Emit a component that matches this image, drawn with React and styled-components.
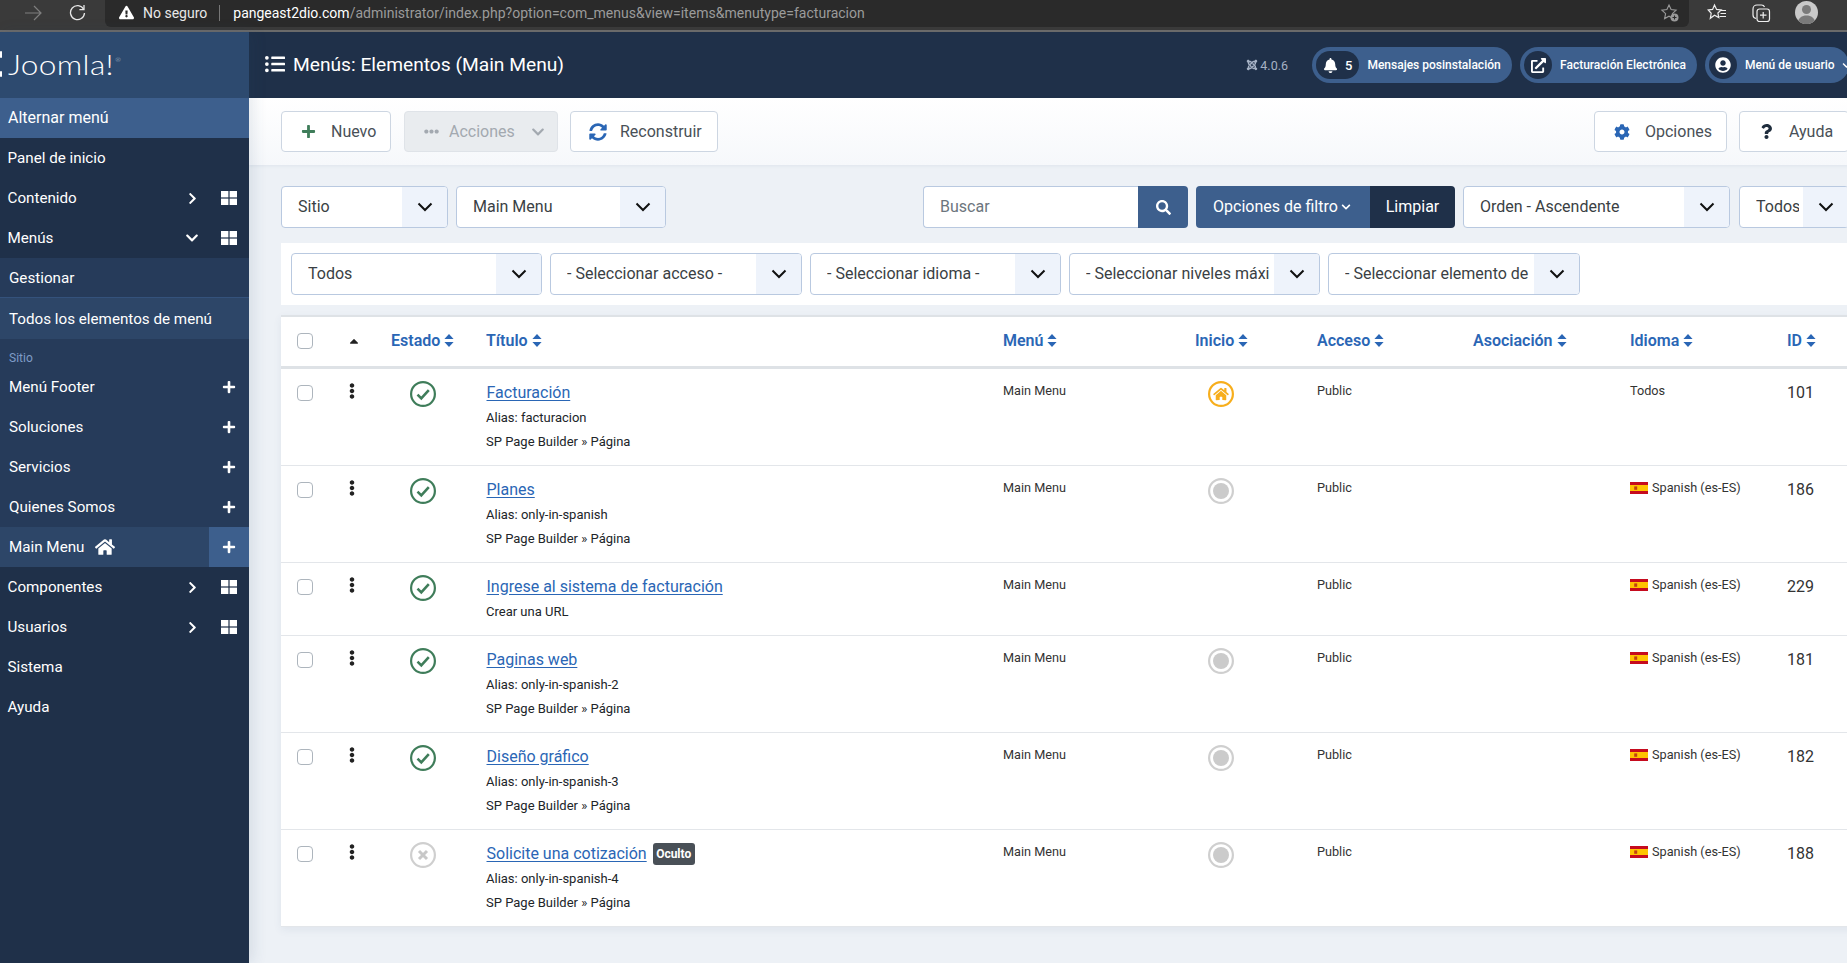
import React from 'react';
import styled, { createGlobalStyle } from 'styled-components';
import {
  FaJoomla, FaHome, FaPlus, FaEllipsisH, FaEllipsisV, FaSyncAlt, FaCog, FaQuestion, FaSearch,
  FaBell, FaExternalLinkAlt, FaUserCircle, FaChevronDown, FaChevronRight, FaListUl, FaCaretUp, FaExclamationTriangle,
} from 'react-icons/fa';

const Global = createGlobalStyle`
  html, body { margin: 0; padding: 0; height: 100%; overflow: hidden; background: #edf1f6; }
  * { box-sizing: border-box; }
  body { font-family: Roboto, "Liberation Sans", sans-serif; }
`;

const Page = styled.div`width: 1847px; height: 963px; overflow: hidden; display: flex; flex-direction: column;`;

/* browser chrome */
const Browser = styled.div`
  flex: 0 0 32px; width: 1847px; background: #3a3a3a; border-bottom: 2px solid #6a6a6a;
  display: flex; align-items: flex-start; color: #fff;
`;
const Nav = styled.div`flex: 0 0 105px; height: 25px; display: flex; align-items: center; padding-left: 24px; gap: 27px;`;
const AddressField = styled.div`
  flex: 0 0 1584px; height: 27px; background: #2a2a2a; border-radius: 0 0 6px 6px;
  display: flex; align-items: center; padding: 0 9px 2px 14px; font-size: 14px;
`;
const Warn = styled.span`display: flex; color: #fff; font-size: 15px; margin-right: 9px;`;
const Insecure = styled.span`color: #e8e8e8; font-size: 14px;`;
const Sep = styled.span`width: 1px; height: 16px; background: #777; margin: 0 13px 0 12px;`;
const Host = styled.span`color: #fff; font-size: 14px;`;
const UrlRest = styled.span`color: #9b9b9b; font-size: 14px; letter-spacing: .02px; flex: 1;`;
const Tools = styled.div`flex: 1; height: 25px; display: flex; align-items: center; padding-left: 18px; gap: 24px;`;
const Avatar = styled.div`width: 23px; height: 23px; border-radius: 50%; overflow: hidden;`;

const Body = styled.div`display: flex; flex: 1; width: 1849px; min-height: 0;`;

/* sidebar */
const Sidebar = styled.aside`
  flex: 0 0 249px; background: #1f3049; color: #fff; display: flex; flex-direction: column;
  box-shadow: 4px 0 14px rgba(40, 70, 110, .12); z-index: 1;
`;
const Brand = styled.div`height: 66px; background: #2d4a6f; display: flex; align-items: center; padding-bottom: 2px;`;
const Wordmark = styled.span`
  display: inline-block; transform: scaleX(1.13); transform-origin: left center;
  font-family: Lato, "Open Sans", sans-serif; font-weight: 300; font-size: 28px; letter-spacing: .3px;
  color: #fff; margin-left: 6px; line-height: 1;
`;
const Reg = styled.sup`font-size: 6px; color: #c6d0dd; margin-left: 1px; position: relative; top: -3px;`;
const Toggle = styled.div`height: 40px; background: #3d5f8d; display: flex; align-items: center; padding: 0 0 2px 8px; font-size: 16px;`;
const Row = styled.div`
  height: 40px; display: flex; align-items: center; font-size: 15.2px;
  padding-left: ${p => (p.$sub ? 9 : 7.5)}px;
  background: ${p => (p.$active ? '#2d4668' : p.$sub ? '#263b5a' : '#1f3049')};
`;
const RowLabel = styled.span`flex: 1; display: flex; align-items: center; gap: 11px;`;
const Chev = styled.span`width: 34px; display: flex; justify-content: center;`;
const RowIcon = styled.span`width: 40px; height: 40px; display: flex; align-items: center; justify-content: center; background: ${p => (p.$on ? '#3d5f8d' : 'transparent')};`;
const SubBlock = styled.div`background: #263b5a;`;
const SubLink = styled.div`
  height: ${p => p.$h}px; display: flex; align-items: center; padding-left: 9px; font-size: 15.2px;
  background: ${p => (p.$on ? '#2d4668' : '#263b5a')};
  ${p => p.$rule && 'border-bottom: 1px solid #34527c;'}
`;
const Section = styled.div`height: 28px; display: flex; align-items: center; padding: 10px 0 0 9px; font-size: 12px; color: #7f9cc7; background: #263b5a;`;

/* main */
const Main = styled.main`flex: 0 0 1600px; display: flex; flex-direction: column; min-width: 0;`;
const Header = styled.header`height: 66px; background: #1f3049; display: flex; align-items: center; padding-left: 16px; color: #fff;`;
const Title = styled.h1`margin: 0; font-size: 19.2px; font-weight: 400; display: flex; align-items: center; gap: 8px; flex: 1; padding-bottom: 2px;`;
const Version = styled.span`display: flex; align-items: center; gap: 2px; font-size: 12.5px; color: #a6b2c5; margin-right: 24px;`;
const Pills = styled.div`display: flex; gap: 8px;`;
const Pill = styled.div`
  height: 36px; width: ${p => p.$w}px; border-radius: 18px; background: #3d5f8d; padding-left: 4px;
  display: flex; align-items: center; font-size: 12px; font-weight: 500; color: #fff; white-space: nowrap;
`;
const PillBadge = styled.span`
  height: 28px; min-width: 28px; border-radius: 14px; background: #1f3049; display: flex; align-items: center; justify-content: center; gap: 7px;
  padding: ${p => (p.$wide ? '0 7px 0 7px' : '0')}; font-size: 13px; margin-right: 8px;
`;
const PillCaret = styled.span`display: flex; margin-left: 7px;`;

const Toolbar = styled.div`
  height: 67px; padding: 13px 0 14px 32px; display: flex; gap: 12px;
  background: linear-gradient(#fff, #f6f8fb); box-shadow: 0 1px 3px rgba(60, 90, 130, .08);
`;
const Tool = styled.button`
  height: 41px; border-radius: 4px; border: 1px solid ${p => (p.$off ? '#dfe3e8' : '#cdd6e2')};
  background: ${p => (p.$off ? '#e9ecef' : '#fff')}; color: ${p => (p.$off ? '#a3a9b0' : '#495057')};
  font: 400 16px Roboto, sans-serif; display: flex; align-items: center; padding: 0 0 0 ${p => p.$pl || 19}px; gap: ${p => p.$g || 15}px;
  flex: 0 0 ${p => p.$w}px; width: ${p => p.$w}px;
  ${p => p.$end && 'margin-left: auto;'}
  ${p => p.$nudge && `margin-left: ${p.$nudge}px;`}
`;
const ToolCaret = styled.span`display: flex; margin-left: 6px;`;

const Content = styled.div`padding: 21px 0 0 32px; display: flex; flex-direction: column;`;
const Filters = styled.div`display: flex; gap: 8px; height: 42px;`;
const SelectBox = styled.div`
  flex: 0 0 ${p => p.$w}px; width: ${p => p.$w}px; height: 42px; border: 1px solid #b9c9e0; border-radius: 4px; background: #fff;
  display: flex; overflow: hidden; font-size: 16px; color: #3a3f44; ${p => p.$gapL && `margin-left: ${p.$gapL}px;`}
`;
const SelectText = styled.span`flex: 1; min-width: 0; margin: 0 4px 0 16px; line-height: 40px; white-space: nowrap; overflow: hidden;`;
const SelectArrow = styled.span`flex: 0 0 45px; background: #eef3fb; display: flex; align-items: center; justify-content: center;`;
const Search = styled.div`margin-left: auto; flex: 0 0 265px; display: flex; height: 42px;`;
const SearchInput = styled.div`
  flex: 1; border: 1px solid #b9c9e0; border-right: 0; border-radius: 4px 0 0 4px; background: #fff;
  font-size: 16px; color: #6c757d; line-height: 40px; padding-left: 16px;
`;
const SearchBtn = styled.div`flex: 0 0 50px; background: #3d5f8d; border-radius: 0 4px 4px 0; color: #fff; display: flex; align-items: center; justify-content: center;`;
const FilterGroup = styled.div`flex: 0 0 259px; display: flex; height: 42px; color: #fff; font-size: 16px; border-radius: 4px; overflow: hidden; line-height: 40px;`;
const FilterOpt = styled.div`flex: 0 0 174px; background: #3d5f8d; display: flex; align-items: center; justify-content: center; gap: 3px; padding: 0 2px 1px 0;`;
const FilterClear = styled.div`flex: 1; background: #1f3049; display: flex; align-items: center; justify-content: center; padding-bottom: 1px;`;

const Panel = styled.div`margin-top: 15px; height: 62px; background: #fff; padding: 10px; display: flex; gap: 8px;`;

const Table = styled.table`
  margin-top: 10px; width: 100%; table-layout: fixed; border-collapse: collapse; background: #fff;
  border-top: 2px solid #dee2e6; box-shadow: 0 3px 8px rgba(60, 90, 130, .08);
`;
const Th = styled.th`
  height: 51px; padding: 0 0 1px 16px; text-align: left; border-bottom: 3px solid #dee2e6; vertical-align: middle;
  font-size: 16px; font-weight: 600; color: #2a66b5; white-space: nowrap;
`;
const ThInner = styled.span`display: inline-flex; align-items: center; gap: 4px;`;
const Tr = styled.tr`border-bottom: 1px solid #e3e6ea;`;
const Td = styled.td`padding: 11px 0 11px 16px; vertical-align: top; font-size: 12.7px; line-height: 22px; color: #333;`;
const Check = styled.span`display: block; width: 16px; height: 16px; border: 1px solid #adb5bd; border-radius: 4px; background: #fff; margin-top: ${p => p.$mt || 0}px;`;
const Dots = styled.span`display: block; color: #222; font-size: 16px; line-height: 0; margin-top: 3px; margin-left: -3.5px;`;
const Status = styled.span`display: block; margin: 1px 0 0 ${p => p.$ml}px;`;
const Name = styled.a`color: #2a66b5; font-size: 16px; line-height: 24px; text-decoration: underline; text-underline-offset: 2px;`;
const NameLine = styled.div`display: flex; align-items: center; gap: 6px; height: 24px; margin: 1px 0 1px .5px;`;
const Meta = styled.div`font-size: 13px; line-height: 24px; color: #212529;`;
const Badge = styled.span`
  height: 22px; width: 42px; border-radius: 3px; background: #495057; color: #fff;
  font-size: 12px; font-weight: 700; display: flex; align-items: center; justify-content: center;
`;
const Lang = styled.span`display: inline-flex; align-items: center; gap: 4px;`;
const Num = styled.span`display: block; margin-top: 1px; font-size: 16px; line-height: 24px; color: #333;`;

const SortIcon = () => (
  <svg width="10" height="13" viewBox="0 0 10 13" fill="currentColor">
    <path d="M5 0 L9.6 5 H.4Z M.4 8 H9.6 L5 13Z" />
  </svg>
);
const Chevron = ({ w = 16 }) => (
  <svg width={w} height="10" viewBox="0 0 16 10" fill="none" stroke="#111" strokeWidth="2">
    <path d="M1.5 1.5 8 8l6.5-6.5" />
  </svg>
);
const Tiles = () => (
  <svg width="16" height="14" viewBox="0 0 16 14" fill="#fff">
    <rect width="7.4" height="6.4" /><rect x="8.6" width="7.4" height="6.4" />
    <rect y="7.6" width="7.4" height="6.4" /><rect x="8.6" y="7.6" width="7.4" height="6.4" />
  </svg>
);
const Ring = ({ c, children }) => (
  <svg width="26" height="26" viewBox="0 0 26 26" fill="none">
    <circle cx="13" cy="13" r="11.9" stroke={c} strokeWidth="2.2" />
    {children}
  </svg>
);
const Ok = () => (
  <Ring c="#3f7d5a"><path d="M7.5 13.6 11.3 17.4 18.8 9.2" stroke="#3f7d5a" strokeWidth="2.6" /></Ring>
);
const No = () => (
  <Ring c="#cfcfcf"><path d="M9 9 17 17M17 9 9 17" stroke="#c8c8c8" strokeWidth="3" /></Ring>
);
const HomeOn = () => (
  <svg width="26" height="26" viewBox="0 0 26 26" fill="none">
    <circle cx="13" cy="13" r="11.9" stroke="#f7ae1c" strokeWidth="2.2" />
    <svg x="5" y="6" width="16" height="14" viewBox="0 0 576 512"><path fill="#f7ae1c" d="M280.37 148.26 96 300.11V464a16 16 0 0 0 16 16l112.06-.29a16 16 0 0 0 15.92-16V368a16 16 0 0 1 16-16h64a16 16 0 0 1 16 16v95.64a16 16 0 0 0 16 16.05L464 480a16 16 0 0 0 16-16V300L295.67 148.26a12.19 12.19 0 0 0-15.3 0zM571.6 251.47 488 182.56V44.05a12 12 0 0 0-12-12h-56a12 12 0 0 0-12 12v72.61L318.47 43a48 48 0 0 0-61 0L4.34 251.47a12 12 0 0 0-1.6 16.9l25.5 31A12 12 0 0 0 45.15 301l235.22-193.74a12.19 12.19 0 0 1 15.3 0L530.9 301a12 12 0 0 0 16.9-1.6l25.5-31a12 12 0 0 0-1.7-16.93z"/></svg>
  </svg>
);
const HomeOff = () => (
  <svg width="26" height="26" viewBox="0 0 26 26" fill="none">
    <circle cx="13" cy="13" r="11.9" stroke="#cfcfcf" strokeWidth="2.2" />
    <circle cx="13" cy="13" r="8" fill="#cbcbcb" />
  </svg>
);
const Flag = () => (
  <svg width="18" height="12" viewBox="0 0 18 12">
    <rect width="18" height="12" fill="#c60b1e" />
    <rect y="3" width="18" height="6" fill="#ffc400" />
    <rect x="4.2" y="4.4" width="3" height="3.4" fill="#ad1519" opacity=".75" />
  </svg>
);

const items = [
  { t: 'Facturación', a: 'Alias: facturacion', b: 'SP Page Builder » Página', on: true, home: 'on', lang: 'Todos', id: 101 },
  { t: 'Planes', a: 'Alias: only-in-spanish', b: 'SP Page Builder » Página', on: true, home: 'off', id: 186 },
  { t: 'Ingrese al sistema de facturación', a: 'Crear una URL', on: true, id: 229 },
  { t: 'Paginas web', a: 'Alias: only-in-spanish-2', b: 'SP Page Builder » Página', on: true, home: 'off', id: 181 },
  { t: 'Diseño gráfico', a: 'Alias: only-in-spanish-3', b: 'SP Page Builder » Página', on: true, home: 'off', id: 182 },
  { t: 'Solicite una cotización', a: 'Alias: only-in-spanish-4', b: 'SP Page Builder » Página', on: false, home: 'off', id: 188, hidden: true },
];

const cols = [50, 44, 95, 517, 192, 122, 156, 157, 157, 110];

const Sel = ({ w, gapL, children }) => (
  <SelectBox $w={w} $gapL={gapL}>
    <SelectText>{children}</SelectText>
    <SelectArrow><Chevron /></SelectArrow>
  </SelectBox>
);
const Head = ({ children }) => (
  <Th><ThInner>{children}<SortIcon /></ThInner></Th>
);
const TopRow = ({ children, open, plain }) => (
  <Row>
    <RowLabel>{children}</RowLabel>
    {!plain && <Chev>{open ? <FaChevronDown size={14} /> : <FaChevronRight size={13} />}</Chev>}
    {!plain && <RowIcon><Tiles /></RowIcon>}
  </Row>
);
const SubRow = ({ children, active, home }) => (
  <Row $sub $active={active}>
    <RowLabel>{children}{home && <FaHome size={20} />}</RowLabel>
    <RowIcon $on={active}><FaPlus size={14} /></RowIcon>
  </Row>
);

export default function App() {
  return (
    <Page>
      <Global />
      <Browser>
        <Nav>
          <svg width="18" height="16" viewBox="0 0 18 16" fill="none" stroke="#7f7f7f" strokeWidth="1.2"><path d="M1 8h16M10 1l7 7-7 7" /></svg>
          <svg width="17" height="17" viewBox="0 0 17 17" fill="none" stroke="#e6e6e6" strokeWidth="1.3"><path d="M14.6 5.2A7 7 0 1 0 15.5 9" /><path d="M15 1v4.6h-4.6" /></svg>
        </Nav>
        <AddressField>
          <Warn><FaExclamationTriangle /></Warn>
          <Insecure>No seguro</Insecure>
          <Sep />
          <Host>pangeast2dio.com</Host>
          <UrlRest>/administrator/index.php?option=com_menus&amp;view=items&amp;menutype=facturacion</UrlRest>
          <svg width="20" height="20" viewBox="0 0 20 20" fill="none" stroke="#9a9a9a" strokeWidth="1.1"><path d="M9 2l2.1 4.6 5 .6-3.7 3.4 1 5L9 13.2 4.6 15.6l1-5L1.9 7.2l5-.6z" /><circle cx="14.5" cy="14.5" r="4" fill="#9a9a9a" stroke="none" /><path d="M14.5 12.5v4M12.5 14.5h4" stroke="#2a2a2a" /></svg>
        </AddressField>
        <Tools>
          <svg width="20" height="20" viewBox="0 0 20 20" fill="none" stroke="#eee" strokeWidth="1.2"><path d="M7.5 2 9.6 6.4l4.6.5-3.3 3.1.9 4.6-4.3-2.3-4.2 3 .9-5L1.2 7l4.4-.6z" /><path d="M14 7.5h5M13.5 10.5h5.5M12.5 13.5h6.5" /></svg>
          <svg width="20" height="20" viewBox="0 0 20 20" fill="none" stroke="#eee" strokeWidth="1.2"><path d="M5 15.5c-1.7-.3-3-1.7-3-3.5V6c0-2.200 1.800-4 4-4h4.500c1.400 0 2.600.8 3 2" /><rect x="6" y="6" width="12.500" height="12.500" rx="2.500" /><path d="M12.200 9v6.500M9 12.200h6.500" /></svg>
          <Avatar>
            <svg width="23" height="23" viewBox="0 0 23 23"><rect width="23" height="23" fill="#c9c9c9" /><circle cx="11.500" cy="8.500" r="4.500" fill="#7a7a7a" /><path d="M2 23c1-6 5-8.500 9.500-8.500S20 17 21 23z" fill="#7a7a7a" /></svg>
          </Avatar>
        </Tools>
      </Browser>
      <Body>
        <Sidebar>
          <Brand>
            <svg width="2" height="26" viewBox="0 0 2 26" fill="#fff"><rect width="2" height="7" rx="1" /><rect y="20" width="2" height="6" rx="1" /></svg>
            <Wordmark>Joomla!<Reg>®</Reg></Wordmark>
          </Brand>
          <Toggle>Alternar menú</Toggle>
          <TopRow plain>Panel de inicio</TopRow>
          <TopRow>Contenido</TopRow>
          <TopRow open>Menús</TopRow>
          <SubBlock>
            <SubLink $h={40} $rule>Gestionar</SubLink>
            <SubLink $h={41} $on>Todos los elementos de menú</SubLink>
            <Section>Sitio</Section>
            <SubRow>Menú Footer</SubRow>
            <SubRow>Soluciones</SubRow>
            <SubRow>Servicios</SubRow>
            <SubRow>Quienes Somos</SubRow>
            <SubRow active home>Main Menu</SubRow>
          </SubBlock>
          <TopRow>Componentes</TopRow>
          <TopRow>Usuarios</TopRow>
          <TopRow plain>Sistema</TopRow>
          <TopRow plain>Ayuda</TopRow>
        </Sidebar>
        <Main>
          <Header>
            <Title><FaListUl size={20} />Menús: Elementos (Main Menu)</Title>
            <Version><FaJoomla size={12} />4.0.6</Version>
            <Pills>
              <Pill $w={200}><PillBadge $wide><FaBell size={15} /><span>5</span></PillBadge>Mensajes posinstalación</Pill>
              <Pill $w={177}><PillBadge><FaExternalLinkAlt size={15} /></PillBadge>Facturación Electrónica</Pill>
              <Pill $w={144}><PillBadge><FaUserCircle size={16} /></PillBadge>Menú de usuario<PillCaret><FaChevronDown size={9} /></PillCaret></Pill>
            </Pills>
          </Header>
          <Toolbar>
            <Tool $w={110}><FaPlus size={15} color="#3f7d5a" />Nuevo</Tool>
            <Tool $off $w={154} $g={10} $nudge={1}><FaEllipsisH size={15} />Acciones<ToolCaret><FaChevronDown size={14} /></ToolCaret></Tool>
            <Tool $w={148} $pl={18} $g={13}><FaSyncAlt size={18} color="#2a66b5" />Reconstruir</Tool>
            <Tool $end $w={133}><FaCog size={16} color="#2a66b5" />Opciones</Tool>
            <Tool $w={110}><FaQuestion size={15} color="#1f2d3d" />Ayuda</Tool>
          </Toolbar>
          <Content>
            <Filters>
              <Sel w={167}>Sitio</Sel>
              <Sel w={210}>Main Menu</Sel>
              <Search>
                <SearchInput>Buscar</SearchInput>
                <SearchBtn><FaSearch size={15} /></SearchBtn>
              </Search>
              <FilterGroup>
                <FilterOpt>Opciones de filtro<FaChevronDown size={10} /></FilterOpt>
                <FilterClear>Limpiar</FilterClear>
              </FilterGroup>
              <Sel w={267}>Orden - Ascendente</Sel>
              <Sel w={110} gapL={1}>Todos</Sel>
            </Filters>
            <Panel>
              <Sel w={251}>Todos</Sel>
              <Sel w={252}>- Seleccionar acceso -</Sel>
              <Sel w={251}>- Seleccionar idioma -</Sel>
              <Sel w={251}>- Seleccionar niveles máximos -</Sel>
              <Sel w={252}>- Seleccionar elemento de menú -</Sel>
            </Panel>
            <Table>
              <colgroup>{cols.map((c, i) => <col key={i} style={{ width: c }} />)}</colgroup>
              <thead>
                <tr>
                  <Th><Check /></Th>
                  <Th><FaCaretUp size={14} color="#222" style={{ display: 'block' }} /></Th>
                  <Head>Estado</Head>
                  <Head>Título</Head>
                  <Head>Menú</Head>
                  <Head>Inicio</Head>
                  <Head>Acceso</Head>
                  <Head>Asociación</Head>
                  <Head>Idioma</Head>
                  <Head>ID</Head>
                </tr>
              </thead>
              <tbody>
                {items.map(r => (
                  <Tr key={r.id}>
                    <Td><Check $mt={5} /></Td>
                    <Td><Dots><FaEllipsisV /></Dots></Td>
                    <Td><Status $ml={19}>{r.on ? <Ok /> : <No />}</Status></Td>
                    <Td>
                      <NameLine>
                        <Name>{r.t}</Name>
                        {r.hidden && <Badge>Oculto</Badge>}
                      </NameLine>
                      <Meta>{r.a}</Meta>
                      {r.b && <Meta>{r.b}</Meta>}
                    </Td>
                    <Td>Main Menu</Td>
                    <Td><Status $ml={13}>{r.home === 'on' ? <HomeOn /> : r.home === 'off' ? <HomeOff /> : null}</Status></Td>
                    <Td>Public</Td>
                    <Td />
                    <Td>{r.lang || <Lang><Flag />Spanish (es-ES)</Lang>}</Td>
                    <Td><Num>{r.id}</Num></Td>
                  </Tr>
                ))}
              </tbody>
            </Table>
          </Content>
        </Main>
      </Body>
    </Page>
  );
}
